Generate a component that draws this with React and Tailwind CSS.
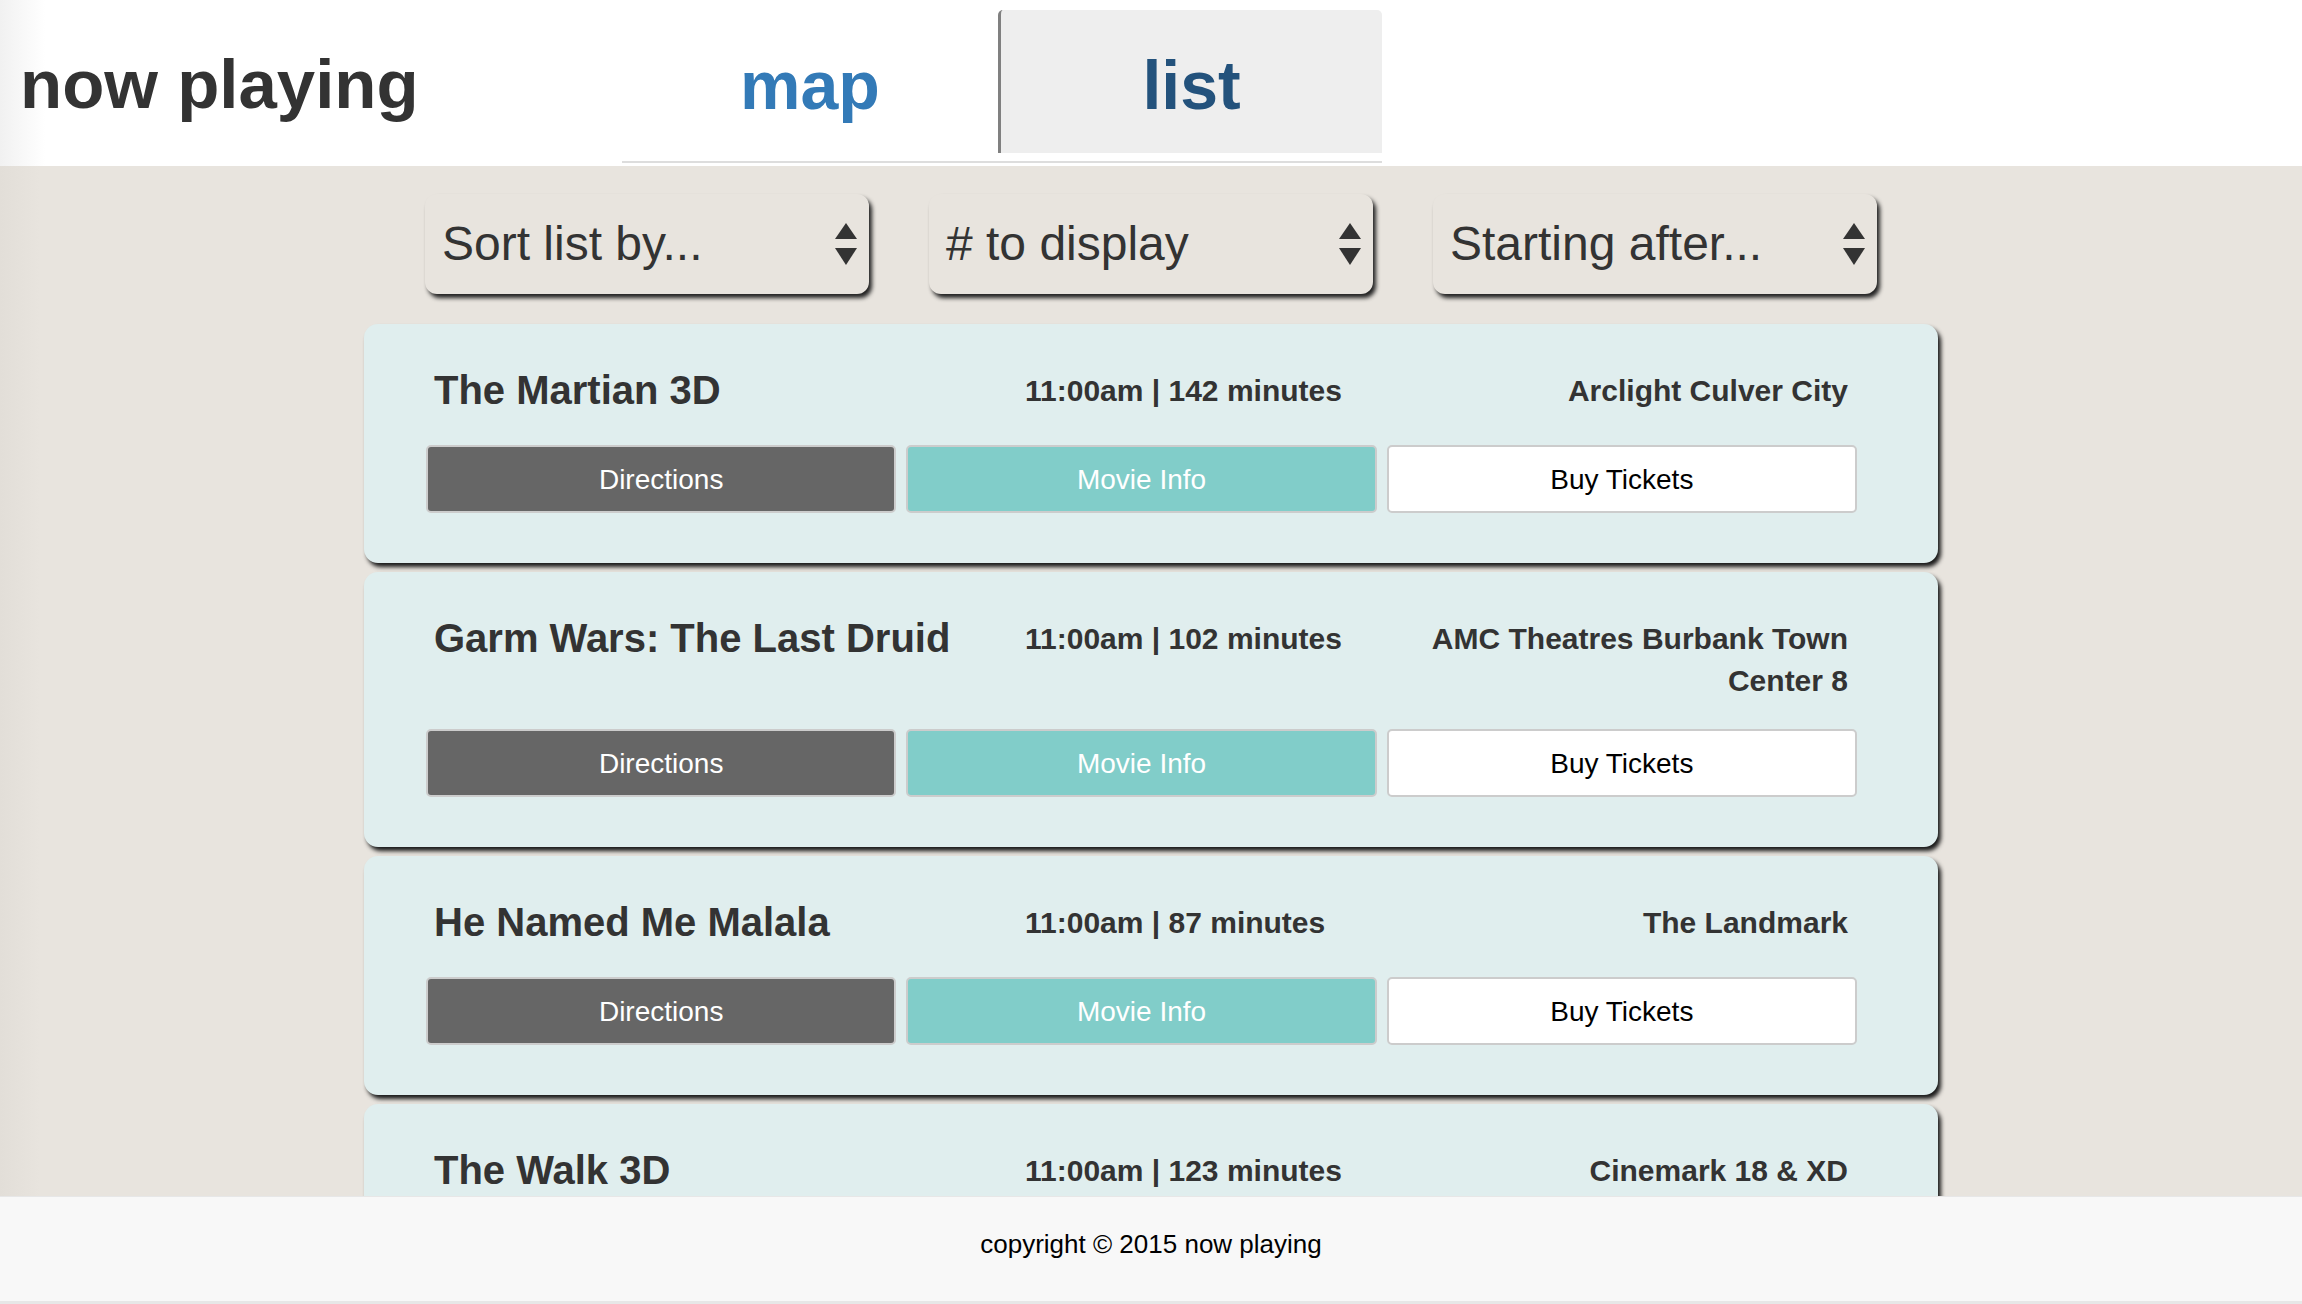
import React from "react";

const SHOWINGS = [
  { title: "The Martian 3D", time: "11:00am | 142 minutes", theater: "Arclight Culver City" },
  { title: "Garm Wars: The Last Druid", time: "11:00am | 102 minutes", theater: "AMC Theatres Burbank Town Center 8" },
  { title: "He Named Me Malala", time: "11:00am | 87 minutes", theater: "The Landmark" },
  { title: "The Walk 3D", time: "11:00am | 123 minutes", theater: "Cinemark 18 & XD" },
];

const FILTERS = ["Sort list by...", "# to display", "Starting after..."];

// Up/down arrows of a native select
function SelectArrows() {
  return (
    <svg width="22" height="42" viewBox="0 0 22 42" className="shrink-0">
      <polygon points="11,0 22,16 0,16" fill="#333" />
      <polygon points="0,25 22,25 11,42" fill="#333" />
    </svg>
  );
}

function FilterSelect({ label }) {
  return (
    <div className="w-[444px] h-[100px] rounded-[12px] bg-[#e8e4de] shadow-[3px_4px_4px_#222] flex items-center justify-between pl-[17px] pr-[12px]">
      <span className="text-[48px] leading-[48px] text-[#333]">{label}</span>
      <SelectArrows />
    </div>
  );
}

function ShowingCard({ showing }) {
  return (
    <div className="w-[1574px] shrink-0 rounded-[14px] bg-[#e0eeee] shadow-[3px_4px_4px_#1a1a1a] pt-[38px] pb-[50px] pl-[62px] pr-[81px]">
      {/* Title / time / theater row */}
      <div className="flex items-start pl-[8px] pr-[9px] text-[#333] font-bold">
        <div className="w-[591px] shrink-0 text-[40px] leading-[56px]">{showing.title}</div>
        <div className="w-[351px] shrink-0 pt-[8px] text-[30px] leading-[42px]">{showing.time}</div>
        <div className="flex-1 pt-[8px] text-[30px] leading-[42px] text-right">{showing.theater}</div>
      </div>

      {/* Action buttons */}
      <div className="mt-[27px] grid grid-cols-3 gap-[10px] text-[28px] leading-[32px]">
        <button className="h-[68px] pt-[2px] rounded-[5px] border-2 border-[#ccc] bg-[#666] text-white">
          Directions
        </button>
        <button className="h-[68px] pt-[2px] rounded-[5px] border-2 border-[#ccc] bg-[#81cdc9] text-white">
          Movie Info
        </button>
        <button className="h-[68px] pt-[2px] rounded-[5px] border-2 border-[#ccc] bg-white text-black">
          Buy Tickets
        </button>
      </div>
    </div>
  );
}

export default function App() {
  return (
    <div className="h-screen flex flex-col overflow-hidden font-['Liberation_Sans',Arial,sans-serif]">
      {/* Header with tabs */}
      <header className="h-[166px] shrink-0 flex bg-[linear-gradient(to_right,#f1f1f1,#ffffff_45px)]">
        <div className="w-[622px] shrink-0 pl-[20px]">
          <h1 className="mt-[50px] text-[69px] leading-[69px] font-bold text-[#333]">now playing</h1>
        </div>
        <ul className="mt-[10px] self-start flex pb-[8px] border-b-2 border-[#ddd]">
          <li className="w-[376px] h-[143px] flex items-center justify-center pt-[6px] text-[68px] leading-[68px] font-bold text-[#337ab7]">
            map
          </li>
          <li className="w-[384px] h-[143px] flex items-center justify-center pt-[6px] text-[68px] leading-[68px] font-bold text-[#23527c] bg-[#eee] border-l-[3px] border-[#808080] rounded-t-[5px]">
            list
          </li>
        </ul>
      </header>

      {/* List */}
      <main className="flex-1 min-h-0 overflow-hidden flex flex-col items-center bg-[linear-gradient(to_right,#e2ded8,#e8e4de_40px)]">
        <div className="mt-[28px] flex gap-[60px]">
          {FILTERS.map((f) => (
            <FilterSelect key={f} label={f} />
          ))}
        </div>
        <div className="mt-[30px] flex flex-col gap-[9px]">
          {SHOWINGS.map((s) => (
            <ShowingCard key={s.title} showing={s} />
          ))}
        </div>
      </main>

      <footer className="h-[108px] shrink-0 flex items-center justify-center pb-[10px] bg-[#f8f8f8] border-t border-b-[3px] border-[#e7e7e7]">
        <p className="text-[26px] leading-[30px] text-black">copyright © 2015 now playing</p>
      </footer>
    </div>
  );
}
